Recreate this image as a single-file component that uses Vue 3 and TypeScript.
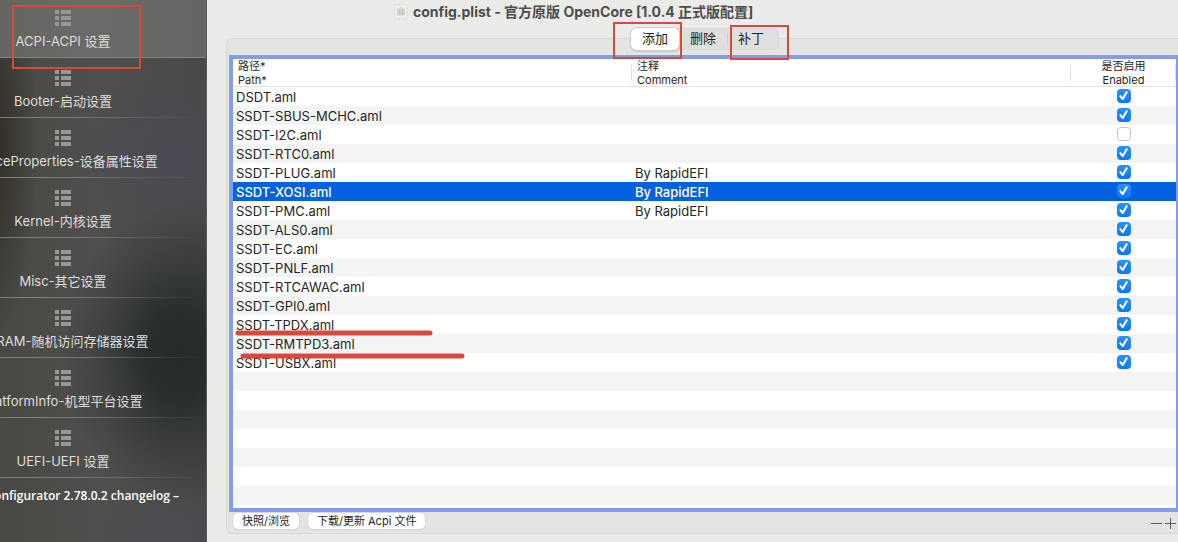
<script setup lang="ts">
import { ref } from 'vue'

interface Entry {
  path: string
  comment: string
  enabled: boolean
}

const sections: string[] = [
  'ACPI-ACPI 设置',
  'Booter-启动设置',
  'DeviceProperties-设备属性设置',
  'Kernel-内核设置',
  'Misc-其它设置',
  'NVRAM-随机访问存储器设置',
  'PlatformInfo-机型平台设置',
  'UEFI-UEFI 设置',
]
const activeSection = ref(0)

const tabs: string[] = ['添加', '删除', '补丁']
const activeTab = ref(0)

const selected = ref(5)
const entries = ref<Entry[]>([
  { path: 'DSDT.aml', comment: '', enabled: true },
  { path: 'SSDT-SBUS-MCHC.aml', comment: '', enabled: true },
  { path: 'SSDT-I2C.aml', comment: '', enabled: false },
  { path: 'SSDT-RTC0.aml', comment: '', enabled: true },
  { path: 'SSDT-PLUG.aml', comment: 'By RapidEFI', enabled: true },
  { path: 'SSDT-XOSI.aml', comment: 'By RapidEFI', enabled: true },
  { path: 'SSDT-PMC.aml', comment: 'By RapidEFI', enabled: true },
  { path: 'SSDT-ALS0.aml', comment: '', enabled: true },
  { path: 'SSDT-EC.aml', comment: '', enabled: true },
  { path: 'SSDT-PNLF.aml', comment: '', enabled: true },
  { path: 'SSDT-RTCAWAC.aml', comment: '', enabled: true },
  { path: 'SSDT-GPI0.aml', comment: '', enabled: true },
  { path: 'SSDT-TPDX.aml', comment: '', enabled: true },
  { path: 'SSDT-RMTPD3.aml', comment: '', enabled: true },
  { path: 'SSDT-USBX.aml', comment: '', enabled: true },
])
</script>

<template>
  <div class="window">
    <aside class="sidebar">
      <nav class="sections">
        <button
          v-for="(name, i) in sections"
          :key="name"
          type="button"
          class="section"
          :class="{ active: i === activeSection }"
          @click="activeSection = i"
        >
          <svg class="list-icon" viewBox="0 0 16 16" aria-hidden="true">
            <path d="M0 0h4v4H0zM6 0h10v4H6zM0 6h4v4H0zM6 6h10v4H6zM0 12h4v4H0zM6 12h10v4H6z" />
          </svg>
          <span>{{ name }}</span>
        </button>
      </nav>
      <p class="changelog">OpenCore Configurator 2.78.0.2 changelog –</p>
      <span class="mark mark-section"></span>
    </aside>

    <main class="main">
      <header class="titlebar">
        <svg class="doc-icon" viewBox="0 0 14 16" aria-hidden="true">
          <rect x="0.5" y="0.5" width="13" height="14.5" rx="2" fill="#efefed" stroke="#dededc" />
          <path d="M3 5.500q0-1 1-1h2l1-2h1v2h2q1 0 1 1v5q0 1-1 1H4q-1 0-1-1z" fill="#d3d3d1" />
          <path d="M5.500 5v6M8.500 5v6" stroke="#c8c8c6" stroke-width="1" />
        </svg>
        <h1>config.plist - 官方原版 OpenCore [1.0.4 正式版配置]</h1>
      </header>

      <div class="tab-row">
        <div class="tabs">
          <button
            v-for="(tab, i) in tabs"
            :key="tab"
            type="button"
            class="tab"
            :class="{ on: i === activeTab }"
            @click="activeTab = i"
          >{{ tab }}</button>
          <span class="mark mark-add"></span>
          <span class="mark mark-patch"></span>
        </div>
      </div>

      <section class="group">
        <div class="grid">
          <table>
            <colgroup>
              <col class="col-path" />
              <col />
              <col class="col-enabled" />
            </colgroup>
            <thead>
              <tr>
                <th scope="col">路径*<br />Path*</th>
                <th scope="col">注释<br />Comment</th>
                <th scope="col" class="center">是否启用<br />Enabled</th>
              </tr>
            </thead>
            <tbody>
              <tr
                v-for="(entry, i) in entries"
                :key="entry.path"
                :class="{ selected: i === selected }"
                @click="selected = i"
              >
                <td>{{ entry.path }}</td>
                <td>{{ entry.comment }}</td>
                <td class="center">
                  <input v-model="entry.enabled" type="checkbox" :aria-label="entry.path" />
                </td>
              </tr>
            </tbody>
          </table>
          <div class="filler"></div>
          <svg class="strokes" viewBox="0 0 240 40" aria-hidden="true">
            <path d="M5 10H197M10 33H229" />
          </svg>
        </div>

        <footer class="actions">
          <button type="button" class="push">快照/浏览</button>
          <button type="button" class="push">下载/更新 Acpi 文件</button>
          <span class="space"></span>
          <button type="button" class="sign" aria-label="移除">
            <svg viewBox="0 0 12 12"><path d="M0 6.500h11" /></svg>
          </button>
          <button type="button" class="sign" aria-label="新增">
            <svg viewBox="0 0 12 12"><path d="M0 6.500h11M5.500 1v11" /></svg>
          </button>
        </footer>
      </section>
    </main>
  </div>
</template>

<style>
html,
body {
  margin: 0;
  overflow: hidden;
}
</style>

<style scoped>
.window {
  display: flex;
  height: 100vh;
  overflow: hidden;
  background: #ebebe9;
  color: #262626;
  font-family: Inter, "Noto Sans CJK SC", sans-serif;
  font-size: 13px;
}
button {
  margin: 0;
  padding: 0;
  border: 0;
  background: none;
  color: inherit;
  font: inherit;
}

.sidebar {
  position: relative;
  flex: none;
  box-sizing: border-box;
  width: 207px;
  overflow: hidden;
  border-right: 1px solid #5a5a58;
  background:
    radial-gradient(ellipse 120px 150px at 180px 355px, #252b2b 0%, rgba(37, 43, 43, 0.9) 30%, rgba(37, 43, 43, 0.35) 65%, rgba(37, 43, 43, 0) 100%),
    radial-gradient(ellipse 90px 90px at 170px 155px, #4a4a54 0%, rgba(74, 74, 84, 0) 100%),
    radial-gradient(ellipse 90px 70px at 170px 542px, #4d4c53 0%, rgba(77, 76, 83, 0) 100%),
    radial-gradient(ellipse 45px 200px at -8px 140px, #2e2b20 0%, rgba(46, 43, 32, 0) 100%),
    linear-gradient(90deg, #484844, #4f4f4d 50%, #484847);
}
.sections {
  display: flex;
  flex-direction: column;
  margin: -2px 0 0 -80px;
}
.section {
  display: flex;
  flex-direction: column;
  align-items: center;
  gap: 7px;
  padding: 12px 0 8px;
  border-bottom: 1px solid;
  border-image: linear-gradient(90deg, #7c7c7a 50%, #7c7c7a00 98%) 1;
  color: #dededc;
  line-height: 16px;
  white-space: nowrap;
}
.section.active {
  background: linear-gradient(90deg, #5f5f5b, #6a6a68 60%, #656563);
  border-image: linear-gradient(#858583, #858583) 1;
}
.list-icon {
  width: 16px;
  height: 16px;
  fill: #979796;
}
.changelog {
  margin: 10px 27px 0 -100px;
  color: #fff;
  font-family: "Open Sans", "Noto Sans", sans-serif;
  font-size: 12px;
  font-weight: 600;
  line-height: 16px;
  text-align: right;
  white-space: nowrap;
}

.mark {
  position: absolute;
  box-sizing: border-box;
  border: 2px solid #d9483b;
  pointer-events: none;
}
.mark-section {
  top: 5px;
  left: 12px;
  width: 129px;
  height: 64px;
}
.mark-add {
  top: -6px;
  left: -18px;
  width: 69px;
  height: 37px;
}
.mark-patch {
  top: -3px;
  right: -10px;
  width: 59px;
  height: 35px;
}

.main {
  display: flex;
  flex: 1;
  flex-direction: column;
  min-width: 0;
}
.titlebar {
  display: flex;
  align-items: center;
  gap: 5px;
  height: 24px;
  padding: 0 0 4px 187px;
  white-space: nowrap;
}
.doc-icon {
  flex: none;
  width: 14px;
  height: 16px;
}
h1 {
  margin: 0;
  color: #4d4d4c;
  font-size: 14px;
  font-weight: 700;
  line-height: 20px;
}
.tab-row {
  position: relative;
  z-index: 1;
  display: flex;
  justify-content: center;
  margin: 0 -6px 0 19px;
}
.tabs {
  position: relative;
  display: flex;
  width: 148px;
  height: 22px;
  border-radius: 6px;
  background: #dfdfdd;
  box-shadow: inset 0 0 0 1px #d8d8d6;
}
.tab {
  flex: 1;
  padding-bottom: 2px;
  border-radius: 6px;
  color: #222;
  line-height: 20px;
}
.tab.on {
  background: #fff;
  box-shadow: 0 0 0 1px #cfcfcd, 0 1px 2px #8a8a88;
}
.tab:nth-child(3) {
  padding-right: 4px;
  background: linear-gradient(#cdcdcb, #cdcdcb) 0 5px / 1px 12px no-repeat;
}

.group {
  display: flex;
  flex: 1;
  flex-direction: column;
  min-height: 0;
  margin: -12px -6px 8px 19px;
  padding: 16px 3px 0 2px;
  border: 1px solid #d9d9d7;
  border-radius: 6px;
  background: #e4e4e2;
}
.grid {
  position: relative;
  display: flex;
  flex: 1;
  flex-direction: column;
  min-height: 0;
  overflow: hidden;
  border: 4px solid #869bea;
  background: #fff;
}
table {
  width: 100%;
  border-spacing: 0;
  table-layout: fixed;
}
.col-path {
  width: 399px;
}
.col-enabled {
  width: 105px;
}
th {
  height: 28px;
  padding: 0 5px;
  background: linear-gradient(#dededd, #dededd) right 6px / 1px 16px no-repeat;
  box-shadow: inset 0 -1px #e2e2e2;
  font-size: 11px;
  font-weight: 400;
  line-height: 14px;
  text-align: left;
}
td {
  height: 17px;
  padding: 2px 3px 0;
  line-height: 17px;
  white-space: nowrap;
}
th.center {
  text-align: center;
}
td.center {
  padding: 0 3px 2px;
}
tbody tr:nth-child(even) {
  background: #f3f5f5;
}
tbody tr.selected {
  background: #0461de;
  color: #fff;
  font-weight: 500;
}
input[type='checkbox'] {
  appearance: none;
  display: block;
  box-sizing: border-box;
  width: 14px;
  height: 14px;
  margin: 0 auto;
  border: 1px solid #c4c4c4;
  border-radius: 4px;
  background: #fff;
}
input[type='checkbox']:checked {
  border: 0;
  background: linear-gradient(#2f90ff, #0a78fb);
}
input[type='checkbox']:checked::before {
  content: '';
  display: block;
  width: 14px;
  height: 14px;
  background: #fff;
  clip-path: polygon(18% 54%, 30% 46%, 43% 63%, 69% 18%, 82% 25%, 49% 82%, 40% 82%);
}
.filler {
  flex: 1;
  background: repeating-linear-gradient(#f3f5f5 0 19px, #fff 19px 38px);
}
.strokes {
  position: absolute;
  top: 264px;
  left: 0;
  width: 240px;
  height: 40px;
  fill: none;
  stroke: #d9483b;
  stroke-linecap: round;
  stroke-width: 5px;
  pointer-events: none;
}

.actions {
  display: flex;
  align-items: flex-start;
  gap: 9px;
  height: 20px;
  padding: 1px 3px 0 4px;
}
.push {
  height: 16px;
  padding: 0 9px;
  border-radius: 5px;
  background: #fff;
  box-shadow: 0 0 0 1px #d8d8d6, 0 1px 1px #aaa;
  font-size: 11px;
  line-height: 16px;
  white-space: nowrap;
}
.space {
  flex: 1;
}
.sign {
  width: 12px;
  height: 20px;
}
.sign + .sign {
  margin-left: -7px;
}
.sign svg {
  display: block;
  width: 12px;
  height: 12px;
  stroke: #5e5e5c;
  stroke-width: 1;
}
</style>
